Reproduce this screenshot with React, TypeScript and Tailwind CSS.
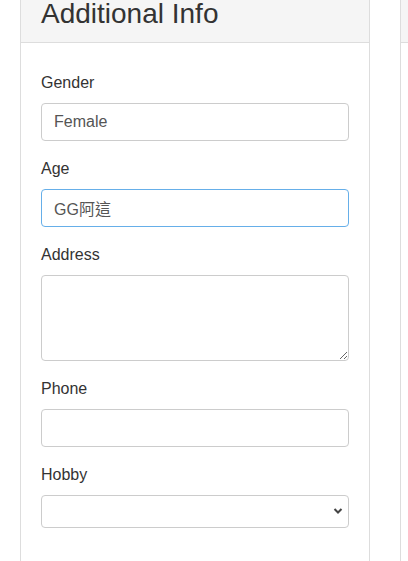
import React from 'react';

const inputCls =
  'block w-full h-[38px] px-[12px] rounded-[4px] border border-[#cccccc] bg-white text-[16px] text-[#555555] outline-none';

const Field: React.FC<{ label: string; children: React.ReactNode }> = ({ label, children }) => (
  <div className="mb-[15px]">
    <label className="block text-[16px] leading-[24px] text-[#333333] pt-[1px] mb-[8px]">{label}</label>
    {children}
  </div>
);

export default function App() {
  return (
    <div
      className="flex gap-[30px] px-[20px] min-h-[561px] bg-white overflow-hidden"
      style={{ fontFamily: '"Liberation Sans", "Noto Sans CJK TC", Arial, sans-serif' }}
    >
      <div className="w-[350px] shrink-0 border-x border-[#dddddd] min-h-[561px]">
        <div className="h-[43px] bg-[#f5f5f5] border-b border-[#dddddd] px-[20px]">
          <h2 className="text-[28px] leading-[28px] text-[#333333]">Additional Info</h2>
        </div>
        <div className="px-[20px] pt-[27px]">
          <Field label="Gender">
            <input className={inputCls} defaultValue="Female" />
          </Field>
          <Field label="Age">
            <input className={`${inputCls} !border-[#66afe9]`} defaultValue="GG阿這" />
          </Field>
          <Field label="Address">
            <textarea className="block w-full h-[86px] px-[12px] py-[6px] rounded-[4px] border border-[#cccccc] bg-white text-[16px] text-[#555555] outline-none" />
          </Field>
          <Field label="Phone">
            <input className={inputCls} />
          </Field>
          <Field label="Hobby">
            <div className="relative">
              <select className="block w-full h-[33px] px-[12px] rounded-[4px] border border-[#cccccc] bg-white text-[16px] text-[#555555] outline-none appearance-none">
                <option value=""></option>
              </select>
              <svg
                className="absolute right-[6px] top-[12px] w-[10px] h-[8px] pointer-events-none"
                viewBox="0 0 10 8"
                fill="none"
                stroke="#444444"
                strokeWidth="2"
              >
                <path d="M1.5 2 L5 5.5 L8.5 2" />
              </svg>
            </div>
          </Field>
        </div>
      </div>
      <div className="w-[350px] shrink-0 border-l border-[#dddddd] min-h-[561px]">
        <div className="h-[43px] bg-[#f5f5f5] border-b border-[#dddddd]" />
      </div>
    </div>
  );
}
